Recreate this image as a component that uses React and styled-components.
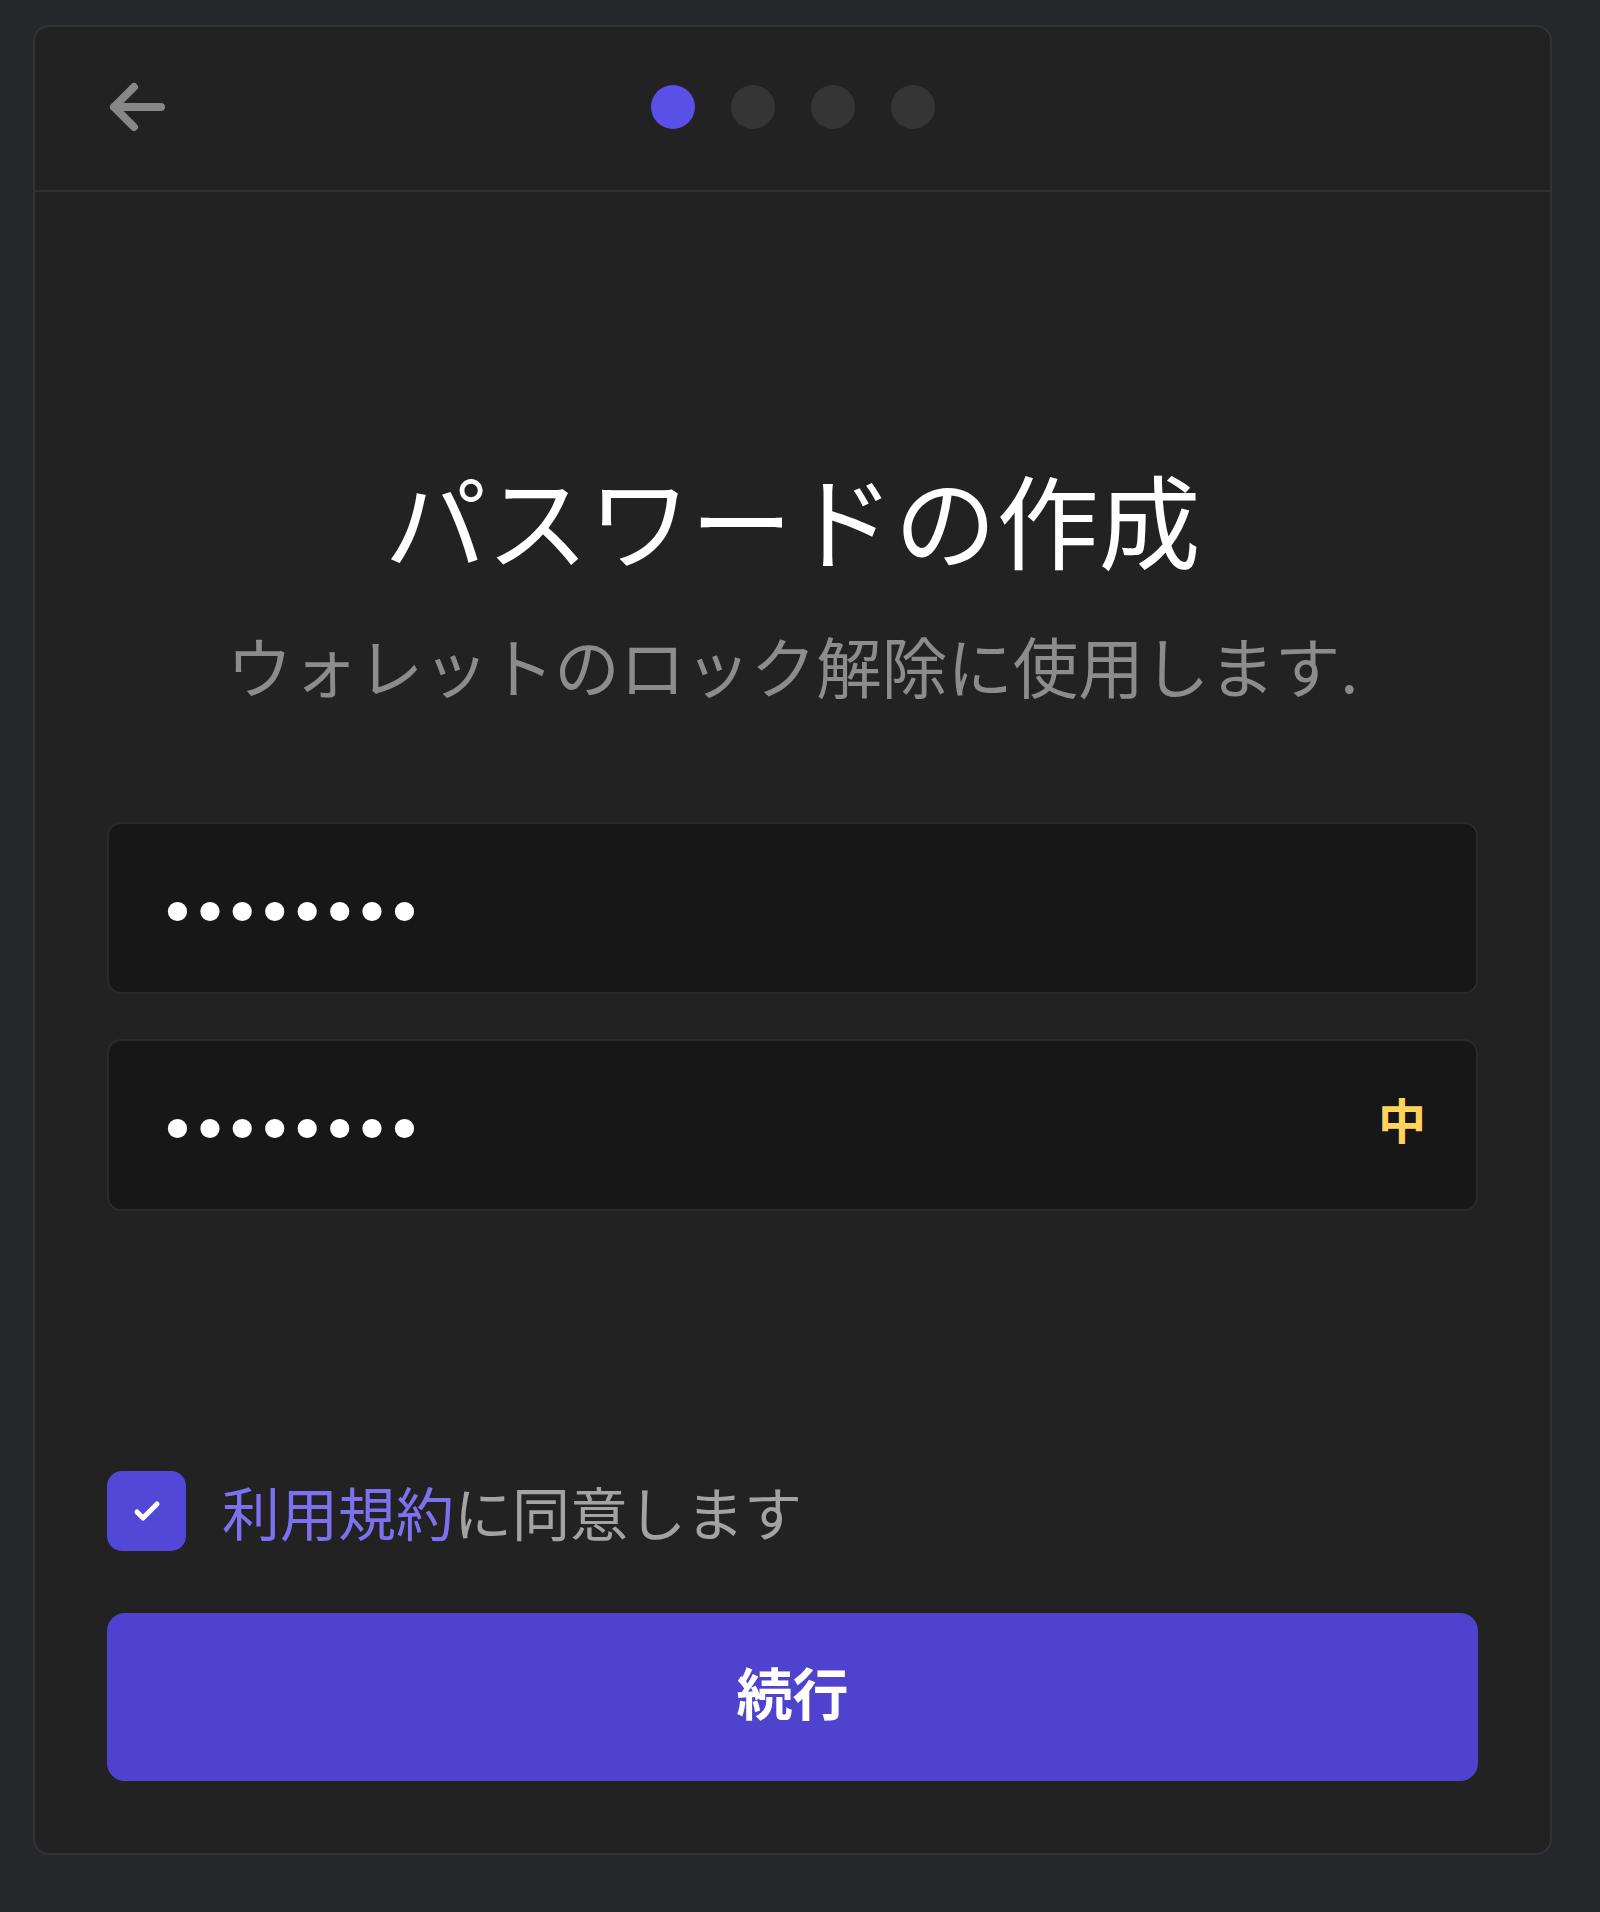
import React from "react";
import styled, { createGlobalStyle } from "styled-components";

const GlobalStyle = createGlobalStyle`
  html, body {
    margin: 0;
    padding: 0;
    background: #26272b;
  }
  * {
    box-sizing: border-box;
  }
`;

const font = `"Noto Sans CJK JP", "Noto Sans", sans-serif`;

//Layout
const Page = styled.div`
  height: 1912px;
  padding: 25px 48px 57px 33px;
  font-family: ${font};
`;

const Card = styled.div`
  height: 100%;
  display: flex;
  flex-direction: column;
  background: #222222;
  border: 2px solid #333335;
  border-radius: 16px;
  overflow: hidden;
`;

const Header = styled.header`
  height: 165px;
  flex-shrink: 0;
  display: grid;
  grid-template-columns: 1fr auto 1fr;
  align-items: center;
  padding: 0 73px 4px;
  border-bottom: 2px solid #313131;
`;

const BackButton = styled.button`
  justify-self: start;
  background: none;
  border: none;
  padding: 0;
  display: flex;
  cursor: pointer;
`;

const Steps = styled.div`
  display: flex;
  gap: 36px;
`;

const Step = styled.span`
  width: 44px;
  height: 44px;
  border-radius: 50%;
  background: ${(p) => (p.active ? "#5a4fe6" : "#353535")};
`;

const Body = styled.main`
  flex: 1;
  display: flex;
  flex-direction: column;
  padding: 0 72px 72px;
`;

const Title = styled.h1`
  margin: 265px 0 0;
  text-align: center;
  font-size: 102px;
  line-height: 1.2;
  font-weight: 400;
  color: #ffffff;
`;

const Subtitle = styled.p`
  margin: 43px 0 0;
  text-align: center;
  font-size: 65.5px;
  line-height: 1.3;
  color: #8c8c8c;
`;

const Fields = styled.div`
  margin-top: 114px;
  display: flex;
  flex-direction: column;
  gap: 45px;
`;

const Field = styled.label`
  height: 172px;
  display: flex;
  align-items: center;
  padding: 0 50px 0 49px;
  background: #171717;
  border: 2px solid #2b2b2b;
  border-radius: 14px;
`;

const PasswordInput = styled.input`
  flex: 1;
  min-width: 0;
  margin-top: 12px;
  background: transparent;
  border: none;
  outline: none;
  padding: 0;
  color: #ffffff;
  font-family: "DejaVu Sans", sans-serif;
  font-size: 66px;
  letter-spacing: -6.5px;
`;

const Strength = styled.span`
  font-size: 48px;
  line-height: 1;
  font-weight: 700;
  color: #ffd45c;
  margin-top: -14px;
`;

const Spacer = styled.div`
  flex: 1;
`;

const AgreeRow = styled.div`
  display: flex;
  align-items: center;
  gap: 36px;
  margin-bottom: 60px;
`;

const Checkbox = styled.span`
  width: 79px;
  height: 80px;
  flex-shrink: 0;
  display: flex;
  align-items: center;
  justify-content: center;
  background: #5247d6;
  border-radius: 15px;
`;

const AgreeText = styled.span`
  font-size: 58px;
  color: #a3a3a3;
`;

const TermsLink = styled.a`
  color: #7d71f0;
  text-decoration: none;
`;

const PrimaryButton = styled.button`
  height: 168px;
  width: 100%;
  border: none;
  border-radius: 18px;
  padding: 0 0 14px;
  background: #4f42cf;
  color: #ffffff;
  font-family: ${font};
  font-size: 56px;
  font-weight: 700;
  cursor: pointer;
`;

const ArrowLeft = () => (
  <svg width="58" height="50" viewBox="0 0 58 50" fill="none">
    <path
      d="M6 25 H53 M26 5 L6 25 L26 45"
      stroke="#878787"
      strokeWidth="8"
      strokeLinecap="round"
      strokeLinejoin="round"
    />
  </svg>
);

const CheckMark = () => (
  <svg width="28" height="22" viewBox="0 0 28 22" fill="none">
    <path
      d="M4 12 L10 18 L24 4"
      stroke="#ffffff"
      strokeWidth="5"
      strokeLinecap="round"
      strokeLinejoin="round"
    />
  </svg>
);

const App = () => {
  return (
    <Page>
      <GlobalStyle />
      <Card>
        <Header>
          <BackButton aria-label="戻る">
            <ArrowLeft />
          </BackButton>
          <Steps>
            <Step active />
            <Step />
            <Step />
            <Step />
          </Steps>
        </Header>
        <Body>
          <Title>パスワードの作成</Title>
          <Subtitle>ウォレットのロック解除に使用します.</Subtitle>
          <Fields>
            <Field>
              <PasswordInput type="password" value="password" readOnly />
            </Field>
            <Field>
              <PasswordInput type="password" value="password" readOnly />
              <Strength>中</Strength>
            </Field>
          </Fields>
          <Spacer />
          <AgreeRow>
            <Checkbox>
              <CheckMark />
            </Checkbox>
            <AgreeText>
              <TermsLink href="#">利用規約</TermsLink>に同意します
            </AgreeText>
          </AgreeRow>
          <PrimaryButton>続行</PrimaryButton>
        </Body>
      </Card>
    </Page>
  );
};

export default App;
